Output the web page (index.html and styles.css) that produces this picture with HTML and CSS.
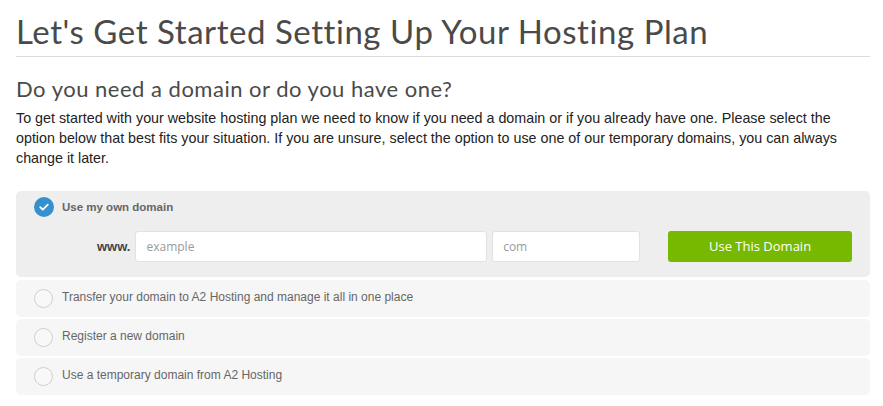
FILE: index.html
```html
<!DOCTYPE html>
<html>
<head>
<meta charset="utf-8">
<link rel="stylesheet" href="styles.css">
</head>
<body>
<div class="page">
  <h1 class="title">Let's Get Started Setting Up Your Hosting Plan</h1>
  <h2 class="subtitle">Do you need a domain or do you have one?</h2>
  <p class="intro">To get started with your website hosting plan we need to know if you need a domain or if you already have one. Please select the option below that best fits your situation. If you are unsure, select the option to use one of our temporary domains, you can always change it later.</p>

  <div class="options">
    <div class="option selected">
      <div class="option-head">
        <span class="check">
          <svg width="20" height="20" viewBox="0 0 20 20"><circle cx="10" cy="10" r="10" fill="#3490cf"/><path d="M6.2 10.2 L8.8 12.7 L13.8 7.6" fill="none" stroke="#fff" stroke-width="1.8" stroke-linecap="round" stroke-linejoin="round"/></svg>
        </span>
        <span class="label-bold">Use my own domain</span>
      </div>
      <div class="domain-row">
        <span class="www">www.</span>
        <input class="field field-name" type="text" placeholder="example">
        <input class="field field-tld" type="text" placeholder="com">
        <button class="btn">Use This Domain</button>
      </div>
    </div>
    <div class="option">
      <span class="radio"></span>
      <span class="label">Transfer your domain to A2 Hosting and manage it all in one place</span>
    </div>
    <div class="option">
      <span class="radio"></span>
      <span class="label">Register a new domain</span>
    </div>
    <div class="option">
      <span class="radio"></span>
      <span class="label">Use a temporary domain from A2 Hosting</span>
    </div>
  </div>
</div>
</body>
</html>
```

FILE: styles.css
```css
* { box-sizing: border-box; }
html, body { margin: 0; padding: 0; background: #fff; }
.page {
  width: 854px;
  margin-left: 16px;
  font-family: "Liberation Sans", Arial, sans-serif;
}
.title {
  margin: 0;
  padding-top: 13px;
  padding-bottom: 6px;
  font-family: "Lato", "Open Sans", sans-serif;
  font-weight: 400;
  font-size: 33px;
  line-height: 37px;
  letter-spacing: 0.55px;
  color: #4a4a4a;
  border-bottom: 1px solid #dcdcdc;
}
.subtitle {
  margin: 19px 0 0;
  font-family: "Lato", "Open Sans", sans-serif;
  font-weight: 400;
  font-size: 22px;
  line-height: 26px;
  letter-spacing: 0.5px;
  color: #4a4a4a;
}
.intro {
  margin: 6px 0 0;
  font-size: 14.3px;
  line-height: 20px;
  color: #222;
}
.options {
  margin-top: 23px;
  display: flex;
  flex-direction: column;
  gap: 2px;
}
.option {
  background: #f6f6f6;
  border-radius: 5px;
  height: 36px;
  display: flex;
  align-items: center;
  padding-left: 18px;
}
.option + .option { height: 37px; }
.option.selected {
  background: #eeeeee;
  height: 86px;
  display: block;
  padding: 6px 18px 0 18px;
  margin-bottom: 1px;
}
.option-head {
  display: flex;
  align-items: center;
  height: 20px;
}
.check { width: 20px; height: 20px; display: block; }
.check svg { display: block; }
.label-bold {
  margin-left: 8px;
  font-size: 11.5px;
  font-weight: 700;
  color: #666;
}
.domain-row {
  display: flex;
  align-items: center;
  margin-top: 14px;
  margin-left: 63px;
}
.www {
  font-size: 13px;
  font-weight: 700;
  color: #444;
  margin-right: 5px;
}
.field {
  height: 31px;
  border: 1px solid #e2e2e2;
  border-radius: 3px;
  background: #fff;
  padding: 0 10px;
  font-family: "Open Sans", sans-serif;
  font-size: 12px;
  color: #333;
  outline: none;
}
.field::placeholder { color: #9a9a9a; }
.field-name { width: 352px; }
.field-tld { width: 148px; margin-left: 5px; }
.btn {
  margin-left: 28px;
  width: 184px;
  height: 31px;
  margin-top: -1px;
  border: none;
  border-radius: 3px;
  background: #76b900;
  color: #fff;
  font-family: "Open Sans", sans-serif;
  font-size: 13px;
  cursor: pointer;
}
.radio {
  width: 19px;
  height: 19px;
  border-radius: 50%;
  border: 1px solid #cfcfcf;
  background: #f8f8f8;
  flex: none;
}
.label {
  margin-left: 9px;
  padding-bottom: 3px;
  font-size: 12px;
  color: #666;
}
```
